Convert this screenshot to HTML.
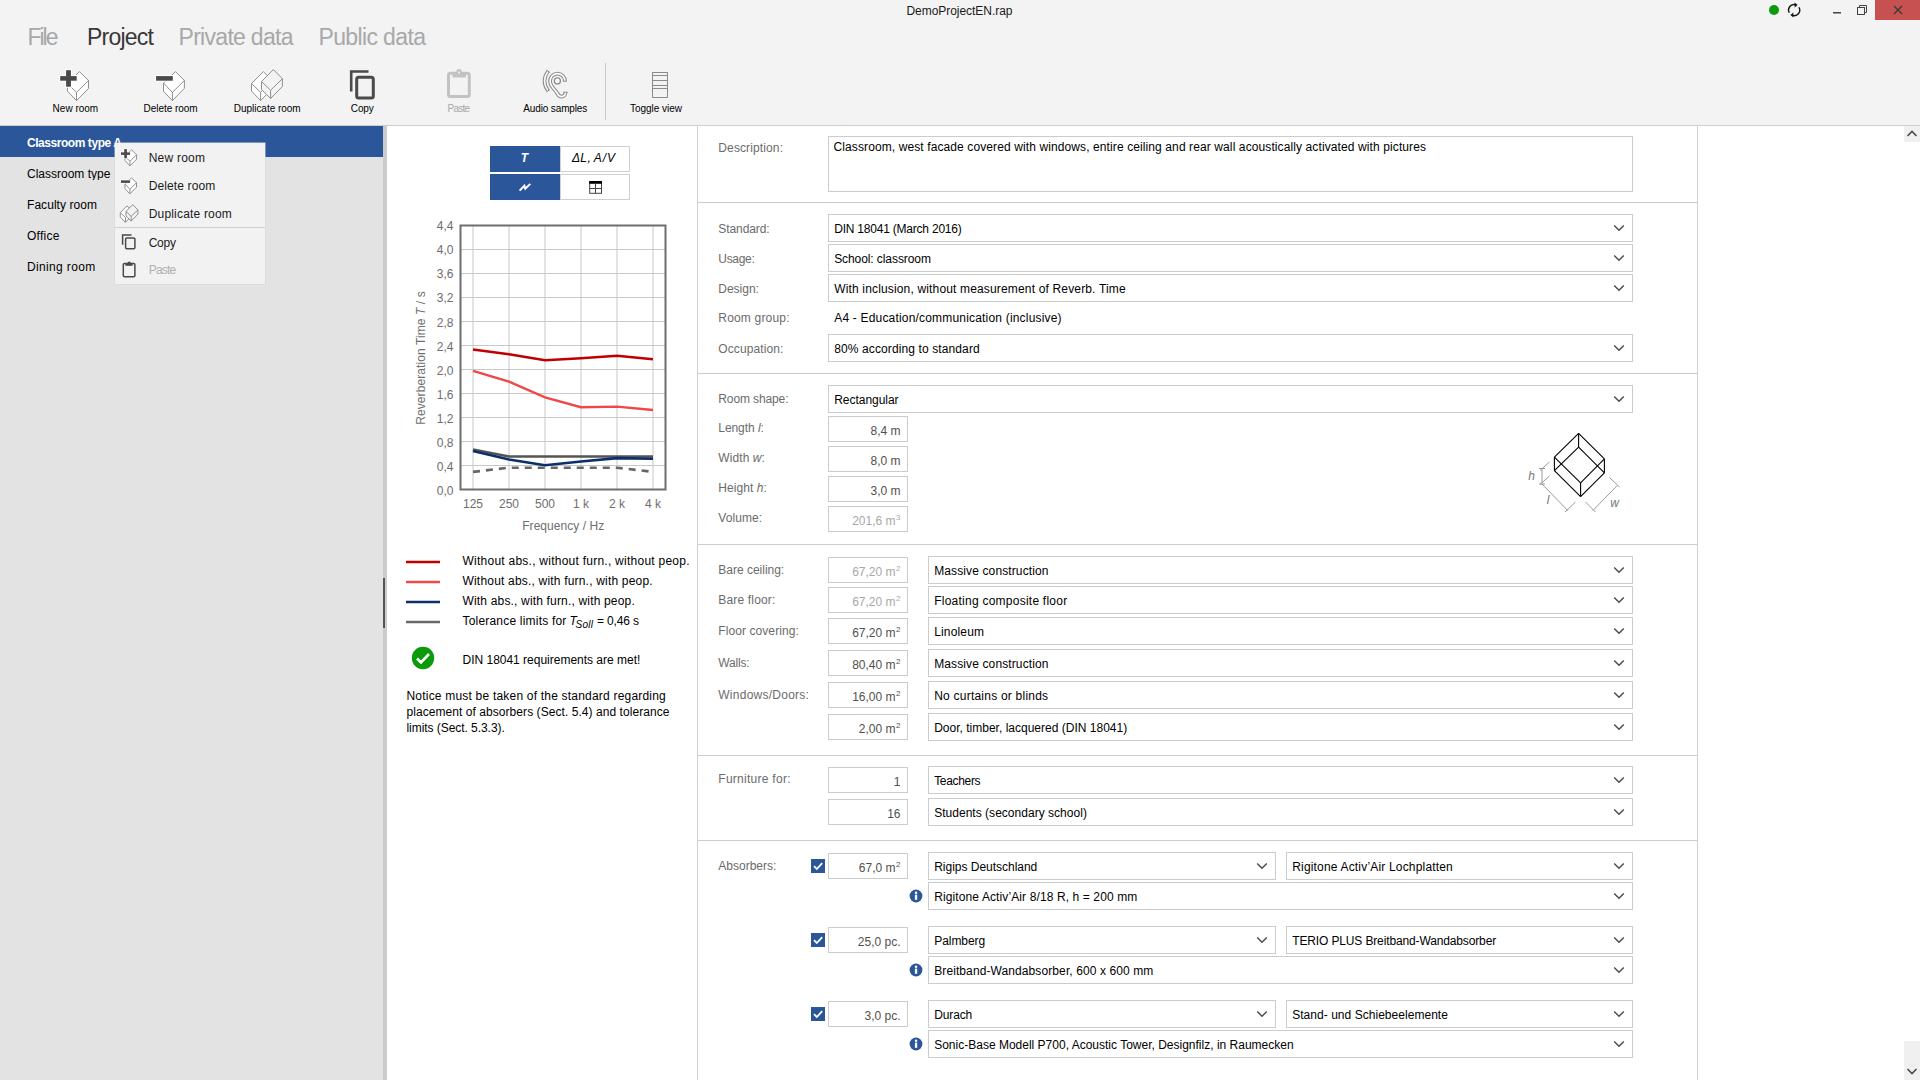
<!DOCTYPE html>
<html><head><meta charset="utf-8"><style>
html,body{margin:0;padding:0;width:1920px;height:1080px;overflow:hidden;background:#fff}
body{position:relative;font-family:"Liberation Sans",sans-serif}
.t{position:absolute;white-space:nowrap}
.r{position:absolute;box-sizing:border-box}
svg.r{overflow:visible}
</style></head><body>
<div class="r" style="left:0px;top:0px;width:1920px;height:125px;background:#f3f3f3"></div>
<div class="r" style="left:0px;top:125px;width:1920px;height:1px;background:#cdcdcd"></div>
<div class="t" style="top:4.84px;font-size:12px;line-height:12px;color:#1a1a1a;letter-spacing:-0.044px;left:559.48px;width:800px;text-align:center;">DemoProjectEN.rap</div>
<div class="t" style="top:26.03px;font-size:23px;line-height:23px;color:#a8a8a8;letter-spacing:-2.020px;left:27.5px;">File</div>
<div class="t" style="top:26.03px;font-size:23px;line-height:23px;color:#383838;letter-spacing:-0.764px;left:87px;">Project</div>
<div class="t" style="top:26.03px;font-size:23px;line-height:23px;color:#a8a8a8;letter-spacing:-0.703px;left:178.5px;">Private data</div>
<div class="t" style="top:26.03px;font-size:23px;line-height:23px;color:#a8a8a8;letter-spacing:-0.630px;left:318.5px;">Public data</div>
<svg class="r" style="left:1760px;top:0px" width="120" height="20" viewBox="0 0 120 20"><circle cx="14" cy="10" r="5" fill="#0a9a0a"/><path d="M29.3 12.75 A5.5 5.5 0 0 1 35.2 4.6" fill="none" stroke="#111" stroke-width="1.35"/><path d="M38.9 7.25 A5.5 5.5 0 0 1 32.6 15.4" fill="none" stroke="#111" stroke-width="1.35"/><path d="M37.6 4.9 L34.6 2.4 L34.6 7.4 Z" fill="#111"/><path d="M30.4 15.1 L33.4 12.6 L33.4 17.6 Z" fill="#111"/><rect x="73" y="12" width="8" height="1.5" fill="#444"/><rect x="97.5" y="7.5" width="7" height="7" fill="none" stroke="#444" stroke-width="1"/><path d="M99.5 7.5 V5.5 H106.5 V12.5 H104.5" fill="none" stroke="#444" stroke-width="1"/></svg>
<div class="r" style="left:1875px;top:0px;width:45px;height:20px;background:#c75050"></div>
<svg class="r" style="left:1875px;top:0px" width="45" height="20" viewBox="0 0 45 20"><path d="M19 6 L27 14 M27 6 L19 14" stroke="#3a3a3a" stroke-width="1.3"/></svg>
<div class="t" style="top:103.53px;font-size:10px;line-height:10px;color:#000;letter-spacing:0.004px;left:52.6px;">New room</div>
<div class="t" style="top:103.53px;font-size:10px;line-height:10px;color:#000;letter-spacing:-0.048px;left:143.6px;">Delete room</div>
<div class="t" style="top:103.53px;font-size:10px;line-height:10px;color:#000;letter-spacing:-0.020px;left:233.7px;">Duplicate room</div>
<div class="t" style="top:103.53px;font-size:10px;line-height:10px;color:#000;letter-spacing:-0.116px;left:350.8px;">Copy</div>
<div class="t" style="top:103.53px;font-size:10px;line-height:10px;color:#a8a8a8;letter-spacing:-0.769px;left:447.5px;">Paste</div>
<div class="t" style="top:103.53px;font-size:10px;line-height:10px;color:#000;letter-spacing:-0.133px;left:523.3px;">Audio samples</div>
<div class="t" style="top:103.53px;font-size:10px;line-height:10px;color:#000;letter-spacing:-0.026px;left:630px;">Toggle view</div>
<div class="r" style="left:605px;top:63px;width:1px;height:57px;background:#c8c8c8"></div>
<svg class="r" style="left:0;top:0" width="700" height="125" viewBox="0 0 700 125"><path d="M79.40 71.70 L88.50 80.40 L88.50 88.50 L76.50 100.60 L67.40 91.00 L67.40 83.60 Z" fill="#fff" stroke="#8f8f8f" stroke-width="1.0" stroke-linejoin="round"/><path d="M67.40 83.60 L76.50 92.40 L88.50 80.40 M76.50 92.40 L76.50 100.60" fill="none" stroke="#8f8f8f" stroke-width="1.0"/><rect x="59.20" y="75.10" width="18.50" height="6.60" fill="#fff"/><rect x="65.10" y="69.20" width="6.80" height="18.50" fill="#fff"/><rect x="60.20" y="76.10" width="16.50" height="4.60" fill="#4a4a4a"/><rect x="66.10" y="70.20" width="4.80" height="16.50" fill="#4a4a4a"/><path d="M175.40 71.70 L184.40 80.40 L184.40 88.30 L172.40 100.60 L163.50 91.30 L163.50 83.10 Z" fill="#fff" stroke="#8f8f8f" stroke-width="1.0" stroke-linejoin="round"/><path d="M163.50 83.10 L172.40 92.40 L184.40 80.40 M172.40 92.40 L172.40 100.60" fill="none" stroke="#8f8f8f" stroke-width="1.0"/><rect x="155.10" y="75.10" width="18.70" height="6.60" fill="#fff"/><rect x="156.10" y="76.10" width="16.70" height="4.60" fill="#4a4a4a"/><path d="M263.40 71.70 L272.40 80.60 L272.40 88.60 L260.60 100.60 L251.50 91.10 L251.50 83.50 Z" fill="#fff" stroke="#8f8f8f" stroke-width="1.0" stroke-linejoin="round"/><path d="M251.50 83.50 L260.60 92.20 L272.40 80.60 M260.60 92.20 L260.60 100.60" fill="none" stroke="#8f8f8f" stroke-width="1.0"/><path d="M273.30 69.60 L282.40 78.70 L282.40 86.50 L270.60 98.50 L261.50 89.40 L261.50 81.50 Z" fill="#f3f3f3" stroke="#8f8f8f" stroke-width="1.0" stroke-linejoin="round"/><path d="M261.50 81.50 L270.60 90.20 L282.40 78.70 M270.60 90.20 L270.60 98.50" fill="none" stroke="#8f8f8f" stroke-width="1.0"/><path d="M351.2 91.5 V71.5 H368.5" fill="none" stroke="#4a4a4a" stroke-width="2.6"/><rect x="356.7" y="77.3" width="16.6" height="20.8" rx="2" fill="none" stroke="#4a4a4a" stroke-width="3"/><rect x="448.5" y="73.2" width="20.8" height="23.2" rx="2" fill="none" stroke="#c2c2c2" stroke-width="3"/><path d="M452.5 72 H466 V77.5 H452.5 Z" fill="#c2c2c2"/><circle cx="459" cy="71.5" r="2.6" fill="#c2c2c2"/><circle cx="459" cy="72.5" r="1" fill="#f3f3f3"/><g fill="none" stroke-linecap="butt"><path d="M548.2 71 Q540.8 81 548.2 91" stroke="#8c8c8c" stroke-width="3.6"/><path d="M548.2 71 Q540.8 81 548.2 91" stroke="#fff" stroke-width="1.5"/><path d="M564.9 81 A7.4 7.4 0 1 0 550.1 81 C550.1 86.5 554.5 89 556.5 92 C558 94.5 558.5 96.6 561.5 96.6 C564 96.6 565.5 94.5 565.5 92" stroke="#8c8c8c" stroke-width="3.8"/><path d="M564.9 81 A7.4 7.4 0 1 0 550.1 81 C550.1 86.5 554.5 89 556.5 92 C558 94.5 558.5 96.6 561.5 96.6 C564 96.6 565.5 94.5 565.5 92" stroke="#fff" stroke-width="1.6"/><path d="M562.9 81.2 H566.9 M563.5 92.2 H567.5 M546.6 70.2 L549.9 72.4 M546.6 91.8 L549.9 89.6" stroke="#8c8c8c" stroke-width="1"/><circle cx="557.4" cy="80.9" r="3" fill="#fff" stroke="#8c8c8c" stroke-width="1.3"/></g><g fill="none" stroke="#8c8c8c" stroke-width="1"><rect x="652.5" y="72.5" width="15" height="25"/><path d="M652.5 75.5 H667.5 M652.5 80.5 H667.5 M652.5 85.5 H667.5 M652.5 88.5 H667.5"/></g></svg>
<div class="r" style="left:0px;top:126px;width:383px;height:954px;background:#e3e3e3"></div>
<div class="r" style="left:383px;top:126px;width:4px;height:954px;background:#cbcbcb"></div>
<div class="r" style="left:383px;top:578px;width:2px;height:50px;background:#555"></div>
<div class="r" style="left:0px;top:126px;width:383px;height:31px;background:#2b579a"></div>
<div class="t" style="top:137.24px;font-size:12px;line-height:12px;color:#fff;font-weight:bold;letter-spacing:-0.450px;left:27px;">Classroom type A</div>
<div class="t" style="top:167.64px;font-size:12px;line-height:12px;color:#000;left:27px;width:86px;overflow:hidden;">Classroom type B</div>
<div class="t" style="top:198.64px;font-size:12px;line-height:12px;color:#000;letter-spacing:0.050px;left:27px;">Faculty room</div>
<div class="t" style="top:229.64px;font-size:12px;line-height:12px;color:#000;letter-spacing:0.255px;left:27px;">Office</div>
<div class="t" style="top:260.64px;font-size:12px;line-height:12px;color:#000;letter-spacing:0.351px;left:27px;">Dining room</div>
<div class="r" style="left:115px;top:143px;width:150px;height:141px;background:#f2f2f2;box-shadow:0 0 0 0.5px #d8d8d8"></div>
<div class="r" style="left:115px;top:227px;width:150px;height:1px;background:#cfcfcf"></div>
<div class="t" style="top:151.74px;font-size:12px;line-height:12px;color:#1a1a1a;letter-spacing:0.231px;left:148.7px;">New room</div>
<div class="t" style="top:179.64px;font-size:12px;line-height:12px;color:#1a1a1a;letter-spacing:0.124px;left:148.7px;">Delete room</div>
<div class="t" style="top:207.84px;font-size:12px;line-height:12px;color:#1a1a1a;letter-spacing:0.185px;left:148.7px;">Duplicate room</div>
<div class="t" style="top:236.64px;font-size:12px;line-height:12px;color:#1a1a1a;letter-spacing:-0.271px;left:148.7px;">Copy</div>
<div class="t" style="top:264.34px;font-size:12px;line-height:12px;color:#b0b0b0;letter-spacing:-0.796px;left:148.7px;">Paste</div>
<svg class="r" style="left:100px;top:140px" width="50" height="145" viewBox="100 140 50 145"><path d="M131.57 149.94 L136.58 154.72 L136.58 159.18 L129.97 165.83 L124.97 160.55 L124.97 156.48 Z" fill="#fff" stroke="#8f8f8f" stroke-width="1.0" stroke-linejoin="round"/><path d="M124.97 156.48 L129.97 161.32 L136.58 154.72 M129.97 161.32 L129.97 165.83" fill="none" stroke="#8f8f8f" stroke-width="1.0"/><rect x="120.46" y="151.81" width="10.18" height="3.63" fill="#fff"/><rect x="123.70" y="148.56" width="3.74" height="10.18" fill="#fff"/><rect x="121.01" y="152.35" width="9.08" height="2.53" fill="#4a4a4a"/><rect x="124.26" y="149.11" width="2.64" height="9.07" fill="#4a4a4a"/><path d="M131.57 177.94 L136.52 182.72 L136.52 187.06 L129.92 193.83 L125.03 188.72 L125.03 184.20 Z" fill="#fff" stroke="#8f8f8f" stroke-width="1.0" stroke-linejoin="round"/><path d="M125.03 184.20 L129.92 189.32 L136.52 182.72 M129.92 189.32 L129.92 193.83" fill="none" stroke="#8f8f8f" stroke-width="1.0"/><rect x="120.41" y="179.81" width="10.28" height="3.63" fill="#fff"/><rect x="120.95" y="180.35" width="9.19" height="2.53" fill="#4a4a4a"/><path d="M127.07 205.84 L132.20 210.91 L132.20 215.47 L125.47 222.31 L120.28 216.90 L120.28 212.56 Z" fill="#fff" stroke="#8f8f8f" stroke-width="1.0" stroke-linejoin="round"/><path d="M120.28 212.56 L125.47 217.52 L132.20 210.91 M125.47 217.52 L125.47 222.31" fill="none" stroke="#8f8f8f" stroke-width="1.0"/><path d="M132.71 204.64 L137.90 209.83 L137.90 214.28 L131.17 221.12 L125.98 215.93 L125.98 211.43 Z" fill="#f2f2f2" stroke="#8f8f8f" stroke-width="1.0" stroke-linejoin="round"/><path d="M125.98 211.43 L131.17 216.38 L137.90 209.83 M131.17 216.38 L131.17 221.12" fill="none" stroke="#8f8f8f" stroke-width="1.0"/><path d="M122.6 244.8 V235.1 H131.5" fill="none" stroke="#4a4a4a" stroke-width="1.5"/><rect x="125.6" y="237.9" width="9.3" height="10.8" rx="1.2" fill="none" stroke="#4a4a4a" stroke-width="1.5"/><rect x="123.3" y="263.6" width="11.6" height="13.1" rx="1.2" fill="none" stroke="#4a4a4a" stroke-width="1.5"/><path d="M125.4 263 H132.6 V265.8 H125.4 Z" fill="#4a4a4a"/><circle cx="129.2" cy="263" r="1.6" fill="#4a4a4a"/></svg>
<div class="r" style="left:387px;top:126px;width:1533px;height:954px;background:#fff"></div>
<div class="r" style="left:697px;top:126px;width:1px;height:954px;background:#d0d0d0"></div>
<div class="r" style="left:1697px;top:126px;width:1px;height:954px;background:#d0d0d0"></div>
<div class="r" style="left:1904px;top:126px;width:16px;height:16px;background:#f0f0f0"></div>
<div class="r" style="left:1904px;top:1041px;width:16px;height:39px;background:#f0f0f0"></div>
<svg class="r" style="left:1904px;top:126px" width="16" height="16" viewBox="0 0 16 16"><path d="M3.5 10 L8 5.5 L12.5 10" fill="none" stroke="#4a4a4a" stroke-width="1.6"/></svg>
<svg class="r" style="left:1904px;top:1064px" width="16" height="16" viewBox="0 0 16 16"><path d="M3.5 5 L8 9.5 L12.5 5" fill="none" stroke="#4a4a4a" stroke-width="1.6"/></svg>
<svg class="r" style="left:387px;top:126px" width="310" height="954" viewBox="387 126 310 954"><rect x="490" y="146" width="70" height="26" fill="#2b579a"/><rect x="560.5" y="146.5" width="69" height="25" fill="#fff" stroke="#d0d0d0"/><rect x="490" y="174" width="70" height="26" fill="#2b579a"/><rect x="560.5" y="174.5" width="69" height="25" fill="#fff" stroke="#d0d0d0"/><path d="M519.6 190.6 L524.4 185.7 L525.3 188.7 L530.3 183.9" fill="none" stroke="#fff" stroke-width="2"/><rect x="589.7" y="182" width="11.8" height="11.3" fill="none" stroke="#444" stroke-width="1"/><rect x="589.2" y="181" width="12.8" height="2.8" fill="#000"/><path d="M589.7 188.5 H601.5 M595.5 183 V193.3" stroke="#444" stroke-width="1"/><line x1="460.5" x2="665.5" y1="465.5" y2="465.5" stroke="#c8c8c8" stroke-width="1"/><line x1="460.5" x2="665.5" y1="441.5" y2="441.5" stroke="#c8c8c8" stroke-width="1"/><line x1="460.5" x2="665.5" y1="417.5" y2="417.5" stroke="#c8c8c8" stroke-width="1"/><line x1="460.5" x2="665.5" y1="393.5" y2="393.5" stroke="#c8c8c8" stroke-width="1"/><line x1="460.5" x2="665.5" y1="369.5" y2="369.5" stroke="#c8c8c8" stroke-width="1"/><line x1="460.5" x2="665.5" y1="345.5" y2="345.5" stroke="#c8c8c8" stroke-width="1"/><line x1="460.5" x2="665.5" y1="321.5" y2="321.5" stroke="#c8c8c8" stroke-width="1"/><line x1="460.5" x2="665.5" y1="297.5" y2="297.5" stroke="#c8c8c8" stroke-width="1"/><line x1="460.5" x2="665.5" y1="273.5" y2="273.5" stroke="#c8c8c8" stroke-width="1"/><line x1="460.5" x2="665.5" y1="249.5" y2="249.5" stroke="#c8c8c8" stroke-width="1"/><line x1="473" x2="473" y1="225.5" y2="489.5" stroke="#c8c8c8" stroke-width="1"/><line x1="509" x2="509" y1="225.5" y2="489.5" stroke="#c8c8c8" stroke-width="1"/><line x1="545" x2="545" y1="225.5" y2="489.5" stroke="#c8c8c8" stroke-width="1"/><line x1="581" x2="581" y1="225.5" y2="489.5" stroke="#c8c8c8" stroke-width="1"/><line x1="617" x2="617" y1="225.5" y2="489.5" stroke="#c8c8c8" stroke-width="1"/><line x1="653" x2="653" y1="225.5" y2="489.5" stroke="#c8c8c8" stroke-width="1"/><rect x="460.5" y="225.5" width="205.0" height="264.0" fill="none" stroke="#6e6e6e" stroke-width="2"/><polyline points="473,349.5 509,354.2 545,360.3 581,358.3 617,355.7 653,359.3" fill="none" stroke="#c00000" stroke-width="2.6"/><polyline points="473,370.9 509,381.6 545,397.4 581,407.2 617,406.6 653,410.0" fill="none" stroke="#f04848" stroke-width="2.4"/><polyline points="473,449.5 509,456.5 545,456.5 581,456.5 617,456.5 653,456.5" fill="none" stroke="#555555" stroke-width="2.6"/><polyline points="473,451.0 509,459.5 545,465.3 581,461.5 617,458.1 653,458.7" fill="none" stroke="#0a2f6a" stroke-width="2.6"/><polyline points="473,471.9 509,467.7 545,467.7 581,467.7 617,467.7 653,471.9" fill="none" stroke="#666666" stroke-width="2.6" stroke-dasharray="7 6"/><line x1="406" x2="440" y1="562" y2="562" stroke="#c00000" stroke-width="2.6"/><line x1="406" x2="440" y1="582" y2="582" stroke="#f04848" stroke-width="2.6"/><line x1="406" x2="440" y1="602" y2="602" stroke="#0a2f6a" stroke-width="2.6"/><line x1="406" x2="440" y1="622" y2="622" stroke="#6a6a6a" stroke-width="2.6"/><circle cx="423" cy="658" r="11.2" fill="#0a9a0a"/><path d="M417 658.5 L421 662.5 L429 654" fill="none" stroke="#fff" stroke-width="2.6"/></svg>
<div class="t" style="top:151.84px;font-size:12px;line-height:12px;color:#fff;font-weight:bold;font-style:italic;left:124.50px;width:800px;text-align:center;">T</div>
<div class="t" style="top:151.84px;font-size:12px;line-height:12px;color:#000;font-style:italic;left:572.1px;">&Delta;L</div>
<div class="t" style="top:151.84px;font-size:12px;line-height:12px;color:#000;font-style:italic;left:587.6px;">,</div>
<div class="t" style="top:151.84px;font-size:12px;line-height:12px;color:#000;font-style:italic;letter-spacing:0.929px;left:593.8px;">A/V</div>
<div class="t" style="top:485.14px;font-size:12px;line-height:12px;color:#6e6e6e;right:1466.50px;">0,0</div>
<div class="t" style="top:461.05px;font-size:12px;line-height:12px;color:#6e6e6e;right:1466.50px;">0,4</div>
<div class="t" style="top:436.96px;font-size:12px;line-height:12px;color:#6e6e6e;right:1466.50px;">0,8</div>
<div class="t" style="top:412.87px;font-size:12px;line-height:12px;color:#6e6e6e;right:1466.50px;">1,2</div>
<div class="t" style="top:388.78px;font-size:12px;line-height:12px;color:#6e6e6e;right:1466.50px;">1,6</div>
<div class="t" style="top:364.69px;font-size:12px;line-height:12px;color:#6e6e6e;right:1466.50px;">2,0</div>
<div class="t" style="top:340.60px;font-size:12px;line-height:12px;color:#6e6e6e;right:1466.50px;">2,4</div>
<div class="t" style="top:316.51px;font-size:12px;line-height:12px;color:#6e6e6e;right:1466.50px;">2,8</div>
<div class="t" style="top:292.42px;font-size:12px;line-height:12px;color:#6e6e6e;right:1466.50px;">3,2</div>
<div class="t" style="top:268.33px;font-size:12px;line-height:12px;color:#6e6e6e;right:1466.50px;">3,6</div>
<div class="t" style="top:244.24px;font-size:12px;line-height:12px;color:#6e6e6e;right:1466.50px;">4,0</div>
<div class="t" style="top:220.15px;font-size:12px;line-height:12px;color:#6e6e6e;right:1466.50px;">4,4</div>
<div class="t" style="top:498.04px;font-size:12px;line-height:12px;color:#6e6e6e;left:73.00px;width:800px;text-align:center;">125</div>
<div class="t" style="top:498.04px;font-size:12px;line-height:12px;color:#6e6e6e;left:109.00px;width:800px;text-align:center;">250</div>
<div class="t" style="top:498.04px;font-size:12px;line-height:12px;color:#6e6e6e;left:145.00px;width:800px;text-align:center;">500</div>
<div class="t" style="top:498.04px;font-size:12px;line-height:12px;color:#6e6e6e;left:181.00px;width:800px;text-align:center;">1 k</div>
<div class="t" style="top:498.04px;font-size:12px;line-height:12px;color:#6e6e6e;left:217.00px;width:800px;text-align:center;">2 k</div>
<div class="t" style="top:498.04px;font-size:12px;line-height:12px;color:#6e6e6e;left:253.00px;width:800px;text-align:center;">4 k</div>
<div class="t" style="top:519.84px;font-size:12px;line-height:12px;color:#6e6e6e;letter-spacing:0.057px;left:522.2px;">Frequency / Hz</div>
<div class="t" style="left:421px;top:357.8px;width:0;height:0"><div style="position:absolute;left:-200px;top:-6px;width:400px;text-align:center;transform:rotate(-90deg);font-size:12px;line-height:12px;color:#6e6e6e;letter-spacing:0.088px">Reverberation Time <i>T</i> / s</div></div>
<div class="t" style="top:555.14px;font-size:12px;line-height:12px;color:#000;letter-spacing:0.249px;left:462.5px;">Without abs., without furn., without peop.</div>
<div class="t" style="top:575.14px;font-size:12px;line-height:12px;color:#000;letter-spacing:0.191px;left:462.5px;">Without abs., with furn., with peop.</div>
<div class="t" style="top:595.14px;font-size:12px;line-height:12px;color:#000;letter-spacing:0.171px;left:462.5px;">With abs., with furn., with peop.</div>
<div class="t" style="top:614.94px;font-size:12px;line-height:12px;color:#000;letter-spacing:0.198px;left:462.5px;">Tolerance limits for</div>
<div class="t" style="top:614.94px;font-size:12px;line-height:12px;color:#000;font-style:italic;left:569.5px;">T</div>
<div class="t" style="top:619.83px;font-size:10px;line-height:10px;color:#000;font-style:italic;letter-spacing:0.274px;left:575.6px;">Soll</div>
<div class="t" style="top:614.94px;font-size:12px;line-height:12px;color:#000;letter-spacing:-0.133px;left:596.9px;">= 0,46 s</div>
<div class="t" style="top:653.84px;font-size:12px;line-height:12px;color:#000;letter-spacing:-0.009px;left:462.5px;">DIN 18041 requirements are met!</div>
<div class="t" style="top:690.04px;font-size:12px;line-height:12px;color:#000;letter-spacing:0.203px;left:406.5px;">Notice must be taken of the standard regarding</div>
<div class="t" style="top:705.84px;font-size:12px;line-height:12px;color:#000;letter-spacing:0.059px;left:406.5px;">placement of absorbers (Sect. 5.4) and tolerance</div>
<div class="t" style="top:721.64px;font-size:12px;line-height:12px;color:#000;letter-spacing:-0.053px;left:406.5px;">limits (Sect. 5.3.3).</div>
<div class="t" style="top:141.84px;font-size:12px;line-height:12px;color:#6b6b6b;letter-spacing:0.122px;left:718.3px;">Description:</div>
<div class="r" style="left:828px;top:136px;width:805px;height:56px;background:#fff;border:1px solid #cccccc"></div>
<div class="t" style="top:141.44px;font-size:12px;line-height:12px;color:#000;letter-spacing:0.106px;left:833.5px;">Classroom, west facade covered with windows, entire ceiling and rear wall acoustically activated with pictures</div>
<div class="r" style="left:698px;top:202px;width:999px;height:1px;background:#cdcdcd"></div>
<div class="t" style="top:222.64px;font-size:12px;line-height:12px;color:#6b6b6b;letter-spacing:-0.080px;left:718.3px;">Standard:</div>
<div class="r" style="left:828px;top:214px;width:805px;height:28px;background:#fff;border:1px solid #cccccc"></div>
<svg class="r" style="left:1612.5px;top:223.5px" width="12" height="8" viewBox="0 0 12 8"><path d="M1.2 1.5 L6 6.2 L10.8 1.5" fill="none" stroke="#4d4d4d" stroke-width="1.5"/></svg>
<div class="t" style="top:222.84px;font-size:12px;line-height:12px;color:#000;letter-spacing:-0.213px;left:834.2px;">DIN 18041 (March 2016)</div>
<div class="t" style="top:252.64px;font-size:12px;line-height:12px;color:#6b6b6b;letter-spacing:-0.304px;left:718.3px;">Usage:</div>
<div class="r" style="left:828px;top:244px;width:805px;height:28px;background:#fff;border:1px solid #cccccc"></div>
<svg class="r" style="left:1612.5px;top:253.5px" width="12" height="8" viewBox="0 0 12 8"><path d="M1.2 1.5 L6 6.2 L10.8 1.5" fill="none" stroke="#4d4d4d" stroke-width="1.5"/></svg>
<div class="t" style="top:252.84px;font-size:12px;line-height:12px;color:#000;letter-spacing:-0.084px;left:834.2px;">School: classroom</div>
<div class="t" style="top:282.64px;font-size:12px;line-height:12px;color:#6b6b6b;letter-spacing:-0.015px;left:718.3px;">Design:</div>
<div class="r" style="left:828px;top:274px;width:805px;height:28px;background:#fff;border:1px solid #cccccc"></div>
<svg class="r" style="left:1612.5px;top:283.5px" width="12" height="8" viewBox="0 0 12 8"><path d="M1.2 1.5 L6 6.2 L10.8 1.5" fill="none" stroke="#4d4d4d" stroke-width="1.5"/></svg>
<div class="t" style="top:282.84px;font-size:12px;line-height:12px;color:#000;letter-spacing:0.159px;left:834.2px;">With inclusion, without measurement of Reverb. Time</div>
<div class="t" style="top:342.64px;font-size:12px;line-height:12px;color:#6b6b6b;letter-spacing:0.106px;left:718.3px;">Occupation:</div>
<div class="r" style="left:828px;top:334px;width:805px;height:28px;background:#fff;border:1px solid #cccccc"></div>
<svg class="r" style="left:1612.5px;top:343.5px" width="12" height="8" viewBox="0 0 12 8"><path d="M1.2 1.5 L6 6.2 L10.8 1.5" fill="none" stroke="#4d4d4d" stroke-width="1.5"/></svg>
<div class="t" style="top:342.84px;font-size:12px;line-height:12px;color:#000;letter-spacing:0.114px;left:834.2px;">80% according to standard</div>
<div class="t" style="top:312.04px;font-size:12px;line-height:12px;color:#6b6b6b;letter-spacing:0.183px;left:718.3px;">Room group:</div>
<div class="t" style="top:312.04px;font-size:12px;line-height:12px;color:#000;letter-spacing:0.187px;left:834.2px;">A4 - Education/communication (inclusive)</div>
<div class="r" style="left:698px;top:373px;width:999px;height:1px;background:#cdcdcd"></div>
<div class="t" style="top:393.44px;font-size:12px;line-height:12px;color:#6b6b6b;letter-spacing:-0.117px;left:718.3px;">Room shape:</div>
<div class="r" style="left:828px;top:385px;width:805px;height:28px;background:#fff;border:1px solid #cccccc"></div>
<svg class="r" style="left:1612.5px;top:394.5px" width="12" height="8" viewBox="0 0 12 8"><path d="M1.2 1.5 L6 6.2 L10.8 1.5" fill="none" stroke="#4d4d4d" stroke-width="1.5"/></svg>
<div class="t" style="top:393.84px;font-size:12px;line-height:12px;color:#000;letter-spacing:-0.031px;left:834.2px;">Rectangular</div>
<div class="t" style="top:422.44px;font-size:12px;line-height:12px;color:#6b6b6b;letter-spacing:-0.067px;left:718.3px;">Length <i>l</i>:</div>
<div class="r" style="left:828px;top:416px;width:80px;height:26px;background:#fff;border:1px solid #cccccc"></div>
<div class="t" style="top:424.84px;font-size:12px;line-height:12px;color:#505050;right:1019.50px;">8,4 m</div>
<div class="t" style="top:452.44px;font-size:12px;line-height:12px;color:#6b6b6b;letter-spacing:0.085px;left:718.3px;">Width <i>w</i>:</div>
<div class="r" style="left:828px;top:446px;width:80px;height:26px;background:#fff;border:1px solid #cccccc"></div>
<div class="t" style="top:454.84px;font-size:12px;line-height:12px;color:#505050;right:1019.50px;">8,0 m</div>
<div class="t" style="top:482.44px;font-size:12px;line-height:12px;color:#6b6b6b;letter-spacing:0.046px;left:718.3px;">Height <i>h</i>:</div>
<div class="r" style="left:828px;top:476px;width:80px;height:26px;background:#fff;border:1px solid #cccccc"></div>
<div class="t" style="top:484.84px;font-size:12px;line-height:12px;color:#505050;right:1019.50px;">3,0 m</div>
<div class="t" style="top:512.44px;font-size:12px;line-height:12px;color:#6b6b6b;letter-spacing:0.090px;left:718.3px;">Volume:</div>
<div class="r" style="left:828px;top:506px;width:80px;height:26px;background:#fff;border:1px solid #cccccc"></div>
<div class="t" style="top:514.84px;font-size:12px;line-height:12px;color:#a8a8a8;right:1019.50px;">201,6 m<span style="font-size:8px;position:relative;top:-5px;margin-left:0.5px;letter-spacing:0">3</span></div>
<svg class="r" style="left:1520px;top:420px" width="110" height="100" viewBox="1520 420 110 100"><line x1="1578.6" y1="433.3" x2="1554.4" y2="457.2" stroke="#000" stroke-width="1.1"/><line x1="1578.6" y1="433.3" x2="1604.4" y2="458.9" stroke="#000" stroke-width="1.1"/><line x1="1554.4" y1="457.2" x2="1580.6" y2="482.8" stroke="#000" stroke-width="1.1"/><line x1="1604.4" y1="458.9" x2="1580.6" y2="482.8" stroke="#000" stroke-width="1.1"/><line x1="1578.6" y1="447.2" x2="1554.4" y2="470.6" stroke="#000" stroke-width="1.1"/><line x1="1578.6" y1="447.2" x2="1604.4" y2="472.8" stroke="#000" stroke-width="1.1"/><line x1="1554.4" y1="470.6" x2="1580.6" y2="496.7" stroke="#000" stroke-width="1.1"/><line x1="1604.4" y1="472.8" x2="1580.6" y2="496.7" stroke="#000" stroke-width="1.1"/><line x1="1578.6" y1="433.3" x2="1578.6" y2="447.2" stroke="#000" stroke-width="1.1"/><line x1="1554.4" y1="457.2" x2="1554.4" y2="470.6" stroke="#000" stroke-width="1.1"/><line x1="1604.4" y1="458.9" x2="1604.4" y2="472.8" stroke="#000" stroke-width="1.1"/><line x1="1580.6" y1="482.8" x2="1580.6" y2="496.7" stroke="#000" stroke-width="1.1"/><line x1="1542" y1="468" x2="1542" y2="484" stroke="#9a9a9a" stroke-width="1"/><line x1="1540" y1="470.5" x2="1549.5" y2="462" stroke="#9a9a9a" stroke-width="1"/><line x1="1540" y1="484.5" x2="1549.5" y2="476" stroke="#9a9a9a" stroke-width="1"/><line x1="1539" y1="468.5" x2="1545" y2="468.5" stroke="#9a9a9a" stroke-width="1"/><line x1="1539" y1="484" x2="1545" y2="484" stroke="#9a9a9a" stroke-width="1"/><line x1="1542" y1="484" x2="1567.8" y2="510.6" stroke="#9a9a9a" stroke-width="1"/><line x1="1565" y1="512" x2="1575.6" y2="502" stroke="#9a9a9a" stroke-width="1"/><line x1="1592.8" y1="510.6" x2="1617.2" y2="485.6" stroke="#9a9a9a" stroke-width="1"/><line x1="1595.5" y1="512" x2="1585.5" y2="502" stroke="#9a9a9a" stroke-width="1"/><line x1="1619.5" y1="487" x2="1609.5" y2="477.5" stroke="#9a9a9a" stroke-width="1"/></svg>
<div class="t" style="top:469.84px;font-size:12px;line-height:12px;color:#777;font-style:italic;left:1131.50px;width:800px;text-align:center;">h</div>
<div class="t" style="top:494.34px;font-size:12px;line-height:12px;color:#777;font-style:italic;left:1148.00px;width:800px;text-align:center;">l</div>
<div class="t" style="top:496.84px;font-size:12px;line-height:12px;color:#777;font-style:italic;left:1214.50px;width:800px;text-align:center;">w</div>
<div class="r" style="left:698px;top:544px;width:999px;height:1px;background:#cdcdcd"></div>
<div class="t" style="top:564.14px;font-size:12px;line-height:12px;color:#6b6b6b;letter-spacing:-0.011px;left:718.3px;">Bare ceiling:</div>
<div class="r" style="left:828px;top:557px;width:80px;height:26px;background:#fff;border:1px solid #cccccc"></div>
<div class="t" style="top:565.64px;font-size:12px;line-height:12px;color:#a8a8a8;right:1019.50px;">67,20 m<span style="font-size:8px;position:relative;top:-5px;margin-left:0.5px;letter-spacing:0">2</span></div>
<div class="r" style="left:928px;top:556px;width:705px;height:28px;background:#fff;border:1px solid #cccccc"></div>
<svg class="r" style="left:1612.5px;top:565.5px" width="12" height="8" viewBox="0 0 12 8"><path d="M1.2 1.5 L6 6.2 L10.8 1.5" fill="none" stroke="#4d4d4d" stroke-width="1.5"/></svg>
<div class="t" style="top:565.34px;font-size:12px;line-height:12px;color:#000;letter-spacing:0.119px;left:934.2px;">Massive construction</div>
<div class="t" style="top:594.14px;font-size:12px;line-height:12px;color:#6b6b6b;letter-spacing:0.164px;left:718.3px;">Bare floor:</div>
<div class="r" style="left:828px;top:587px;width:80px;height:26px;background:#fff;border:1px solid #cccccc"></div>
<div class="t" style="top:595.64px;font-size:12px;line-height:12px;color:#a8a8a8;right:1019.50px;">67,20 m<span style="font-size:8px;position:relative;top:-5px;margin-left:0.5px;letter-spacing:0">2</span></div>
<div class="r" style="left:928px;top:586px;width:705px;height:28px;background:#fff;border:1px solid #cccccc"></div>
<svg class="r" style="left:1612.5px;top:595.5px" width="12" height="8" viewBox="0 0 12 8"><path d="M1.2 1.5 L6 6.2 L10.8 1.5" fill="none" stroke="#4d4d4d" stroke-width="1.5"/></svg>
<div class="t" style="top:595.34px;font-size:12px;line-height:12px;color:#000;letter-spacing:0.244px;left:934.2px;">Floating composite floor</div>
<div class="t" style="top:625.14px;font-size:12px;line-height:12px;color:#6b6b6b;letter-spacing:0.081px;left:718.3px;">Floor covering:</div>
<div class="r" style="left:828px;top:618px;width:80px;height:26px;background:#fff;border:1px solid #cccccc"></div>
<div class="t" style="top:626.64px;font-size:12px;line-height:12px;color:#505050;right:1019.50px;">67,20 m<span style="font-size:8px;position:relative;top:-5px;margin-left:0.5px;letter-spacing:0">2</span></div>
<div class="r" style="left:928px;top:617px;width:705px;height:28px;background:#fff;border:1px solid #cccccc"></div>
<svg class="r" style="left:1612.5px;top:626.5px" width="12" height="8" viewBox="0 0 12 8"><path d="M1.2 1.5 L6 6.2 L10.8 1.5" fill="none" stroke="#4d4d4d" stroke-width="1.5"/></svg>
<div class="t" style="top:626.34px;font-size:12px;line-height:12px;color:#000;letter-spacing:0.158px;left:934.2px;">Linoleum</div>
<div class="t" style="top:657.14px;font-size:12px;line-height:12px;color:#6b6b6b;letter-spacing:-0.184px;left:718.3px;">Walls:</div>
<div class="r" style="left:828px;top:650px;width:80px;height:26px;background:#fff;border:1px solid #cccccc"></div>
<div class="t" style="top:658.64px;font-size:12px;line-height:12px;color:#505050;right:1019.50px;">80,40 m<span style="font-size:8px;position:relative;top:-5px;margin-left:0.5px;letter-spacing:0">2</span></div>
<div class="r" style="left:928px;top:649px;width:705px;height:28px;background:#fff;border:1px solid #cccccc"></div>
<svg class="r" style="left:1612.5px;top:658.5px" width="12" height="8" viewBox="0 0 12 8"><path d="M1.2 1.5 L6 6.2 L10.8 1.5" fill="none" stroke="#4d4d4d" stroke-width="1.5"/></svg>
<div class="t" style="top:658.34px;font-size:12px;line-height:12px;color:#000;letter-spacing:0.119px;left:934.2px;">Massive construction</div>
<div class="t" style="top:689.14px;font-size:12px;line-height:12px;color:#6b6b6b;letter-spacing:0.249px;left:718.3px;">Windows/Doors:</div>
<div class="r" style="left:828px;top:682px;width:80px;height:26px;background:#fff;border:1px solid #cccccc"></div>
<div class="t" style="top:690.64px;font-size:12px;line-height:12px;color:#505050;right:1019.50px;">16,00 m<span style="font-size:8px;position:relative;top:-5px;margin-left:0.5px;letter-spacing:0">2</span></div>
<div class="r" style="left:928px;top:681px;width:705px;height:28px;background:#fff;border:1px solid #cccccc"></div>
<svg class="r" style="left:1612.5px;top:690.5px" width="12" height="8" viewBox="0 0 12 8"><path d="M1.2 1.5 L6 6.2 L10.8 1.5" fill="none" stroke="#4d4d4d" stroke-width="1.5"/></svg>
<div class="t" style="top:690.34px;font-size:12px;line-height:12px;color:#000;letter-spacing:0.226px;left:934.2px;">No curtains or blinds</div>
<div class="r" style="left:828px;top:714px;width:80px;height:26px;background:#fff;border:1px solid #cccccc"></div>
<div class="t" style="top:722.64px;font-size:12px;line-height:12px;color:#505050;right:1019.50px;">2,00 m<span style="font-size:8px;position:relative;top:-5px;margin-left:0.5px;letter-spacing:0">2</span></div>
<div class="r" style="left:928px;top:713px;width:705px;height:28px;background:#fff;border:1px solid #cccccc"></div>
<svg class="r" style="left:1612.5px;top:722.5px" width="12" height="8" viewBox="0 0 12 8"><path d="M1.2 1.5 L6 6.2 L10.8 1.5" fill="none" stroke="#4d4d4d" stroke-width="1.5"/></svg>
<div class="t" style="top:722.34px;font-size:12px;line-height:12px;color:#000;letter-spacing:0.007px;left:934.2px;">Door, timber, lacquered (DIN 18041)</div>
<div class="r" style="left:698px;top:755px;width:999px;height:1px;background:#cdcdcd"></div>
<div class="t" style="top:772.64px;font-size:12px;line-height:12px;color:#6b6b6b;letter-spacing:0.270px;left:718.3px;">Furniture for:</div>
<div class="r" style="left:828px;top:767px;width:80px;height:26px;background:#fff;border:1px solid #cccccc"></div>
<div class="t" style="top:775.84px;font-size:12px;line-height:12px;color:#505050;right:1019.50px;">1</div>
<div class="r" style="left:928px;top:766px;width:705px;height:28px;background:#fff;border:1px solid #cccccc"></div>
<svg class="r" style="left:1612.5px;top:775.5px" width="12" height="8" viewBox="0 0 12 8"><path d="M1.2 1.5 L6 6.2 L10.8 1.5" fill="none" stroke="#4d4d4d" stroke-width="1.5"/></svg>
<div class="t" style="top:775.14px;font-size:12px;line-height:12px;color:#000;letter-spacing:-0.327px;left:934.2px;">Teachers</div>
<div class="r" style="left:828px;top:799px;width:80px;height:26px;background:#fff;border:1px solid #cccccc"></div>
<div class="t" style="top:807.84px;font-size:12px;line-height:12px;color:#505050;right:1019.50px;">16</div>
<div class="r" style="left:928px;top:798px;width:705px;height:28px;background:#fff;border:1px solid #cccccc"></div>
<svg class="r" style="left:1612.5px;top:807.5px" width="12" height="8" viewBox="0 0 12 8"><path d="M1.2 1.5 L6 6.2 L10.8 1.5" fill="none" stroke="#4d4d4d" stroke-width="1.5"/></svg>
<div class="t" style="top:807.14px;font-size:12px;line-height:12px;color:#000;letter-spacing:0.024px;left:934.2px;">Students (secondary school)</div>
<div class="r" style="left:698px;top:840px;width:999px;height:1px;background:#cdcdcd"></div>
<div class="t" style="top:860.04px;font-size:12px;line-height:12px;color:#6b6b6b;letter-spacing:0.008px;left:718.3px;">Absorbers:</div>
<svg class="r" style="left:811px;top:859px" width="14" height="14" viewBox="0 0 14 14"><rect width="14" height="14" fill="#2b579a"/><path d="M3 7.2 L5.8 10 L11.2 4.2" fill="none" stroke="#fff" stroke-width="1.8"/></svg>
<div class="r" style="left:828px;top:853px;width:80px;height:26px;background:#fff;border:1px solid #cccccc"></div>
<div class="t" style="top:861.64px;font-size:12px;line-height:12px;color:#505050;right:1019.50px;">67,0 m<span style="font-size:8px;position:relative;top:-5px;margin-left:0.5px;letter-spacing:0">2</span></div>
<div class="r" style="left:928px;top:852px;width:348px;height:28px;background:#fff;border:1px solid #cccccc"></div>
<svg class="r" style="left:1255.5px;top:861.5px" width="12" height="8" viewBox="0 0 12 8"><path d="M1.2 1.5 L6 6.2 L10.8 1.5" fill="none" stroke="#4d4d4d" stroke-width="1.5"/></svg>
<div class="t" style="top:861.14px;font-size:12px;line-height:12px;color:#000;letter-spacing:-0.017px;left:934.2px;">Rigips Deutschland</div>
<div class="r" style="left:1286px;top:852px;width:347px;height:28px;background:#fff;border:1px solid #cccccc"></div>
<svg class="r" style="left:1612.5px;top:861.5px" width="12" height="8" viewBox="0 0 12 8"><path d="M1.2 1.5 L6 6.2 L10.8 1.5" fill="none" stroke="#4d4d4d" stroke-width="1.5"/></svg>
<div class="t" style="top:861.14px;font-size:12px;line-height:12px;color:#000;letter-spacing:0.179px;left:1292.2px;">Rigitone Activ&#8217;Air Lochplatten</div>
<div class="r" style="left:928px;top:882px;width:705px;height:28px;background:#fff;border:1px solid #cccccc"></div>
<svg class="r" style="left:1612.5px;top:891.5px" width="12" height="8" viewBox="0 0 12 8"><path d="M1.2 1.5 L6 6.2 L10.8 1.5" fill="none" stroke="#4d4d4d" stroke-width="1.5"/></svg>
<div class="t" style="top:891.14px;font-size:12px;line-height:12px;color:#000;letter-spacing:0.111px;left:934.2px;">Rigitone Activ&#8217;Air 8/18 R, h = 200 mm</div>
<svg class="r" style="left:909.2px;top:889.3px" width="14" height="14" viewBox="0 0 14 14"><circle cx="7" cy="7" r="6.4" fill="#2b579a"/><rect x="5.9" y="5.6" width="2.3" height="5.2" fill="#fff"/><circle cx="7.05" cy="3.8" r="1.25" fill="#fff"/></svg>
<svg class="r" style="left:811px;top:933px" width="14" height="14" viewBox="0 0 14 14"><rect width="14" height="14" fill="#2b579a"/><path d="M3 7.2 L5.8 10 L11.2 4.2" fill="none" stroke="#fff" stroke-width="1.8"/></svg>
<div class="r" style="left:828px;top:927px;width:80px;height:26px;background:#fff;border:1px solid #cccccc"></div>
<div class="t" style="top:935.64px;font-size:12px;line-height:12px;color:#505050;right:1019.50px;">25,0 pc.</div>
<div class="r" style="left:928px;top:926px;width:348px;height:28px;background:#fff;border:1px solid #cccccc"></div>
<svg class="r" style="left:1255.5px;top:935.5px" width="12" height="8" viewBox="0 0 12 8"><path d="M1.2 1.5 L6 6.2 L10.8 1.5" fill="none" stroke="#4d4d4d" stroke-width="1.5"/></svg>
<div class="t" style="top:935.14px;font-size:12px;line-height:12px;color:#000;letter-spacing:-0.051px;left:934.2px;">Palmberg</div>
<div class="r" style="left:1286px;top:926px;width:347px;height:28px;background:#fff;border:1px solid #cccccc"></div>
<svg class="r" style="left:1612.5px;top:935.5px" width="12" height="8" viewBox="0 0 12 8"><path d="M1.2 1.5 L6 6.2 L10.8 1.5" fill="none" stroke="#4d4d4d" stroke-width="1.5"/></svg>
<div class="t" style="top:935.14px;font-size:12px;line-height:12px;color:#000;letter-spacing:-0.135px;left:1292.2px;">TERIO PLUS Breitband-Wandabsorber</div>
<div class="r" style="left:928px;top:956px;width:705px;height:28px;background:#fff;border:1px solid #cccccc"></div>
<svg class="r" style="left:1612.5px;top:965.5px" width="12" height="8" viewBox="0 0 12 8"><path d="M1.2 1.5 L6 6.2 L10.8 1.5" fill="none" stroke="#4d4d4d" stroke-width="1.5"/></svg>
<div class="t" style="top:965.14px;font-size:12px;line-height:12px;color:#000;letter-spacing:0.098px;left:934.2px;">Breitband-Wandabsorber, 600 x 600 mm</div>
<svg class="r" style="left:909.2px;top:963.3px" width="14" height="14" viewBox="0 0 14 14"><circle cx="7" cy="7" r="6.4" fill="#2b579a"/><rect x="5.9" y="5.6" width="2.3" height="5.2" fill="#fff"/><circle cx="7.05" cy="3.8" r="1.25" fill="#fff"/></svg>
<svg class="r" style="left:811px;top:1007px" width="14" height="14" viewBox="0 0 14 14"><rect width="14" height="14" fill="#2b579a"/><path d="M3 7.2 L5.8 10 L11.2 4.2" fill="none" stroke="#fff" stroke-width="1.8"/></svg>
<div class="r" style="left:828px;top:1001px;width:80px;height:26px;background:#fff;border:1px solid #cccccc"></div>
<div class="t" style="top:1009.64px;font-size:12px;line-height:12px;color:#505050;right:1019.50px;">3,0 pc.</div>
<div class="r" style="left:928px;top:1000px;width:348px;height:28px;background:#fff;border:1px solid #cccccc"></div>
<svg class="r" style="left:1255.5px;top:1009.5px" width="12" height="8" viewBox="0 0 12 8"><path d="M1.2 1.5 L6 6.2 L10.8 1.5" fill="none" stroke="#4d4d4d" stroke-width="1.5"/></svg>
<div class="t" style="top:1009.14px;font-size:12px;line-height:12px;color:#000;letter-spacing:-0.117px;left:934.2px;">Durach</div>
<div class="r" style="left:1286px;top:1000px;width:347px;height:28px;background:#fff;border:1px solid #cccccc"></div>
<svg class="r" style="left:1612.5px;top:1009.5px" width="12" height="8" viewBox="0 0 12 8"><path d="M1.2 1.5 L6 6.2 L10.8 1.5" fill="none" stroke="#4d4d4d" stroke-width="1.5"/></svg>
<div class="t" style="top:1009.14px;font-size:12px;line-height:12px;color:#000;letter-spacing:0.037px;left:1292.2px;">Stand- und Schiebeelemente</div>
<div class="r" style="left:928px;top:1030px;width:705px;height:28px;background:#fff;border:1px solid #cccccc"></div>
<svg class="r" style="left:1612.5px;top:1039.5px" width="12" height="8" viewBox="0 0 12 8"><path d="M1.2 1.5 L6 6.2 L10.8 1.5" fill="none" stroke="#4d4d4d" stroke-width="1.5"/></svg>
<div class="t" style="top:1039.14px;font-size:12px;line-height:12px;color:#000;letter-spacing:0.002px;left:934.2px;">Sonic-Base Modell P700, Acoustic Tower, Designfilz, in Raumecken</div>
<svg class="r" style="left:909.2px;top:1037.3px" width="14" height="14" viewBox="0 0 14 14"><circle cx="7" cy="7" r="6.4" fill="#2b579a"/><rect x="5.9" y="5.6" width="2.3" height="5.2" fill="#fff"/><circle cx="7.05" cy="3.8" r="1.25" fill="#fff"/></svg>
</body></html>
